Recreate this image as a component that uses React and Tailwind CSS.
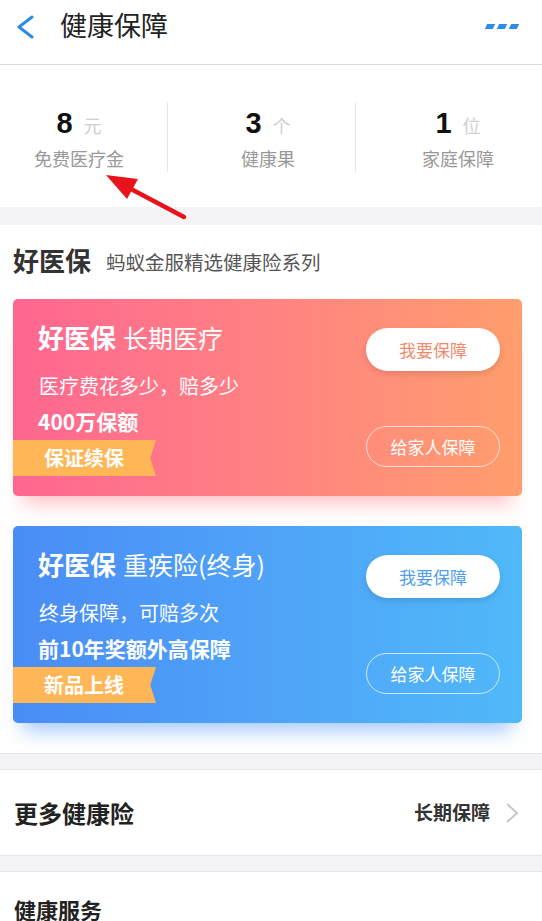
import React from 'react';

const font = { fontFamily: '"Noto Sans CJK SC", "Noto Sans", sans-serif' };

const Stat = ({ num, unit, label, className }) => (
  <div className={`flex flex-col items-center h-[70px] ${className}`}>
    <div className="flex items-baseline mt-[4px] h-[34px] leading-[34px]">
      <span className="text-[29px] font-bold text-[#111]" style={{ fontFamily: '"Liberation Sans", Arial, sans-serif' }}>{num}</span>
      <span className="text-[18px] text-[#cfcfcf] ml-[11px]">{unit}</span>
    </div>
    <div className="mt-[6px] text-[18px] leading-[24px] text-[#999]">{label}</div>
  </div>
);

const PlanCard = ({ name, desc, highlight, tag, theme }) => {
  const orange = theme === 'orange';
  return (
    <div
      className={`flex justify-between h-[197px] rounded-[5px] overflow-hidden ${
        orange
          ? 'bg-gradient-to-r from-[#fe6690] via-[#ff8282] to-[#ff9e6c] shadow-[0_18px_18px_-10px_rgba(255,120,130,0.45)]'
          : 'bg-gradient-to-r from-[#4a8cf6] via-[#4fa3f8] to-[#50b9f9] shadow-[0_18px_18px_-10px_rgba(60,140,250,0.45)]'
      }`}
    >
      <div className="flex flex-col pt-[20px] text-white">
        <div className="pl-[25px] flex items-center h-[36px]">
          <span className="text-[26px] font-bold leading-[36px]">好医保</span>
          <span className="text-[25px] ml-[7px] leading-[36px]">{name}</span>
        </div>
        <div className="pl-[26px] mt-[17px] text-[20px] leading-[28px]">{desc}</div>
        <div className="pl-[25px] mt-[7px] text-[21px] leading-[28px] font-bold">{highlight}</div>
        <div
          className="mt-[5px] w-[143px] h-[36px] bg-[#ffb656] pl-[31px] text-[20px] leading-[36px] font-bold text-white [clip-path:polygon(0_0,100%_0,96%_50%,100%_100%,0_100%)]"
        >
          {tag}
        </div>
      </div>
      <div className="flex flex-col pt-[29px] pr-[22px] gap-[55px]">
        <div
          className={`w-[134px] h-[43px] rounded-full bg-white flex items-center justify-center text-[17px] shadow-[0_3px_6px_rgba(0,0,0,0.12)] ${
            orange ? 'text-[#f2896c]' : 'text-[#4f9ef0]'
          }`}
        >
          我要保障
        </div>
        <div className="w-[134px] h-[41px] rounded-full border border-white/70 flex items-center justify-center text-[17px] text-white">
          给家人保障
        </div>
      </div>
    </div>
  );
};

const App = () => {
  return (
    <div className="relative w-[542px] min-h-[921px] bg-white overflow-hidden" style={font}>
      {/* Header */}
      <div className="flex items-start h-[65px] border-b border-[#dcdcdc] pl-[16px] pr-[24px]">
        <svg width="18" height="24" viewBox="0 0 18 24" className="mt-[15px]">
          <polyline points="16,2 3,12 16,22" fill="none" stroke="#2d8ce8" strokeWidth="3" strokeLinecap="round" strokeLinejoin="round" />
        </svg>
        <div className="ml-[26px] mt-[7px] text-[27px] text-[#222] leading-[36px]">健康保障</div>
        <div className="ml-auto flex gap-[4px] mt-[24px]">
          <span className="w-[8px] h-[5px] bg-[#2d8ce8] -skew-x-[25deg]" />
          <span className="w-[8px] h-[5px] bg-[#2d8ce8] -skew-x-[25deg]" />
          <span className="w-[8px] h-[5px] bg-[#2d8ce8] -skew-x-[25deg]" />
        </div>
      </div>

      {/* Stats */}
      <div className="flex h-[142px] pt-[37px]">
        <Stat num="8" unit="元" label="免费医疗金" className="w-[168px] pr-[9px] border-r border-[#e6e6e6]" />
        <Stat num="3" unit="个" label="健康果" className="w-[188px] pl-[13px] border-r border-[#e6e6e6]" />
        <Stat num="1" unit="位" label="家庭保障" className="flex-1 pl-[18px]" />
      </div>

      <div className="h-[18px] bg-[#f4f4f6]" />

      {/* 好医保 */}
      <div className="pl-[13px] pr-[20px] pt-[17px] pb-[30px]">
        <div className="flex items-center h-[36px]">
          <span className="text-[26px] font-bold text-[#333] leading-[36px]">好医保</span>
          <span className="ml-[15px] mt-[3px] text-[19.5px] text-[#555] leading-[36px]">蚂蚁金服精选健康险系列</span>
        </div>
        <div className="mt-[21px] flex flex-col gap-[30px]">
          <PlanCard theme="orange" name="长期医疗" desc="医疗费花多少，赔多少" highlight="400万保额" tag="保证续保" />
          <PlanCard theme="blue" name="重疾险(终身)" desc="终身保障，可赔多次" highlight="前10年奖额外高保障" tag="新品上线" />
        </div>
      </div>

      <div className="h-[17px] bg-[#f4f4f6] border-y border-[#e6e6e6]" />

      {/* More */}
      <div className="flex items-center h-[85px] pl-[14px] pr-[23px]">
        <span className="text-[24px] font-bold text-[#222]">更多健康险</span>
        <span className="ml-auto text-[19px] font-semibold text-[#333]">长期保障</span>
        <svg width="14" height="22" viewBox="0 0 14 22" className="ml-[15px]">
          <polyline points="2,2 12,11 2,20" fill="none" stroke="#c8c8c8" strokeWidth="2" />
        </svg>
      </div>

      <div className="h-[17px] bg-[#f4f4f6] border-y border-[#e6e6e6]" />

      <div className="pl-[14px] pt-[21px] text-[22px] font-bold text-[#222] leading-[32px]">健康服务</div>

      {/* annotation arrow */}
      <svg className="absolute left-0 top-0 pointer-events-none" width="542" height="240">
        <line x1="184" y1="217" x2="131" y2="189" stroke="#e8131b" strokeWidth="4.5" strokeLinecap="round" />
        <polygon points="106,175 138,179 127,199" fill="#e8131b" />
      </svg>
    </div>
  );
};

export default App;
